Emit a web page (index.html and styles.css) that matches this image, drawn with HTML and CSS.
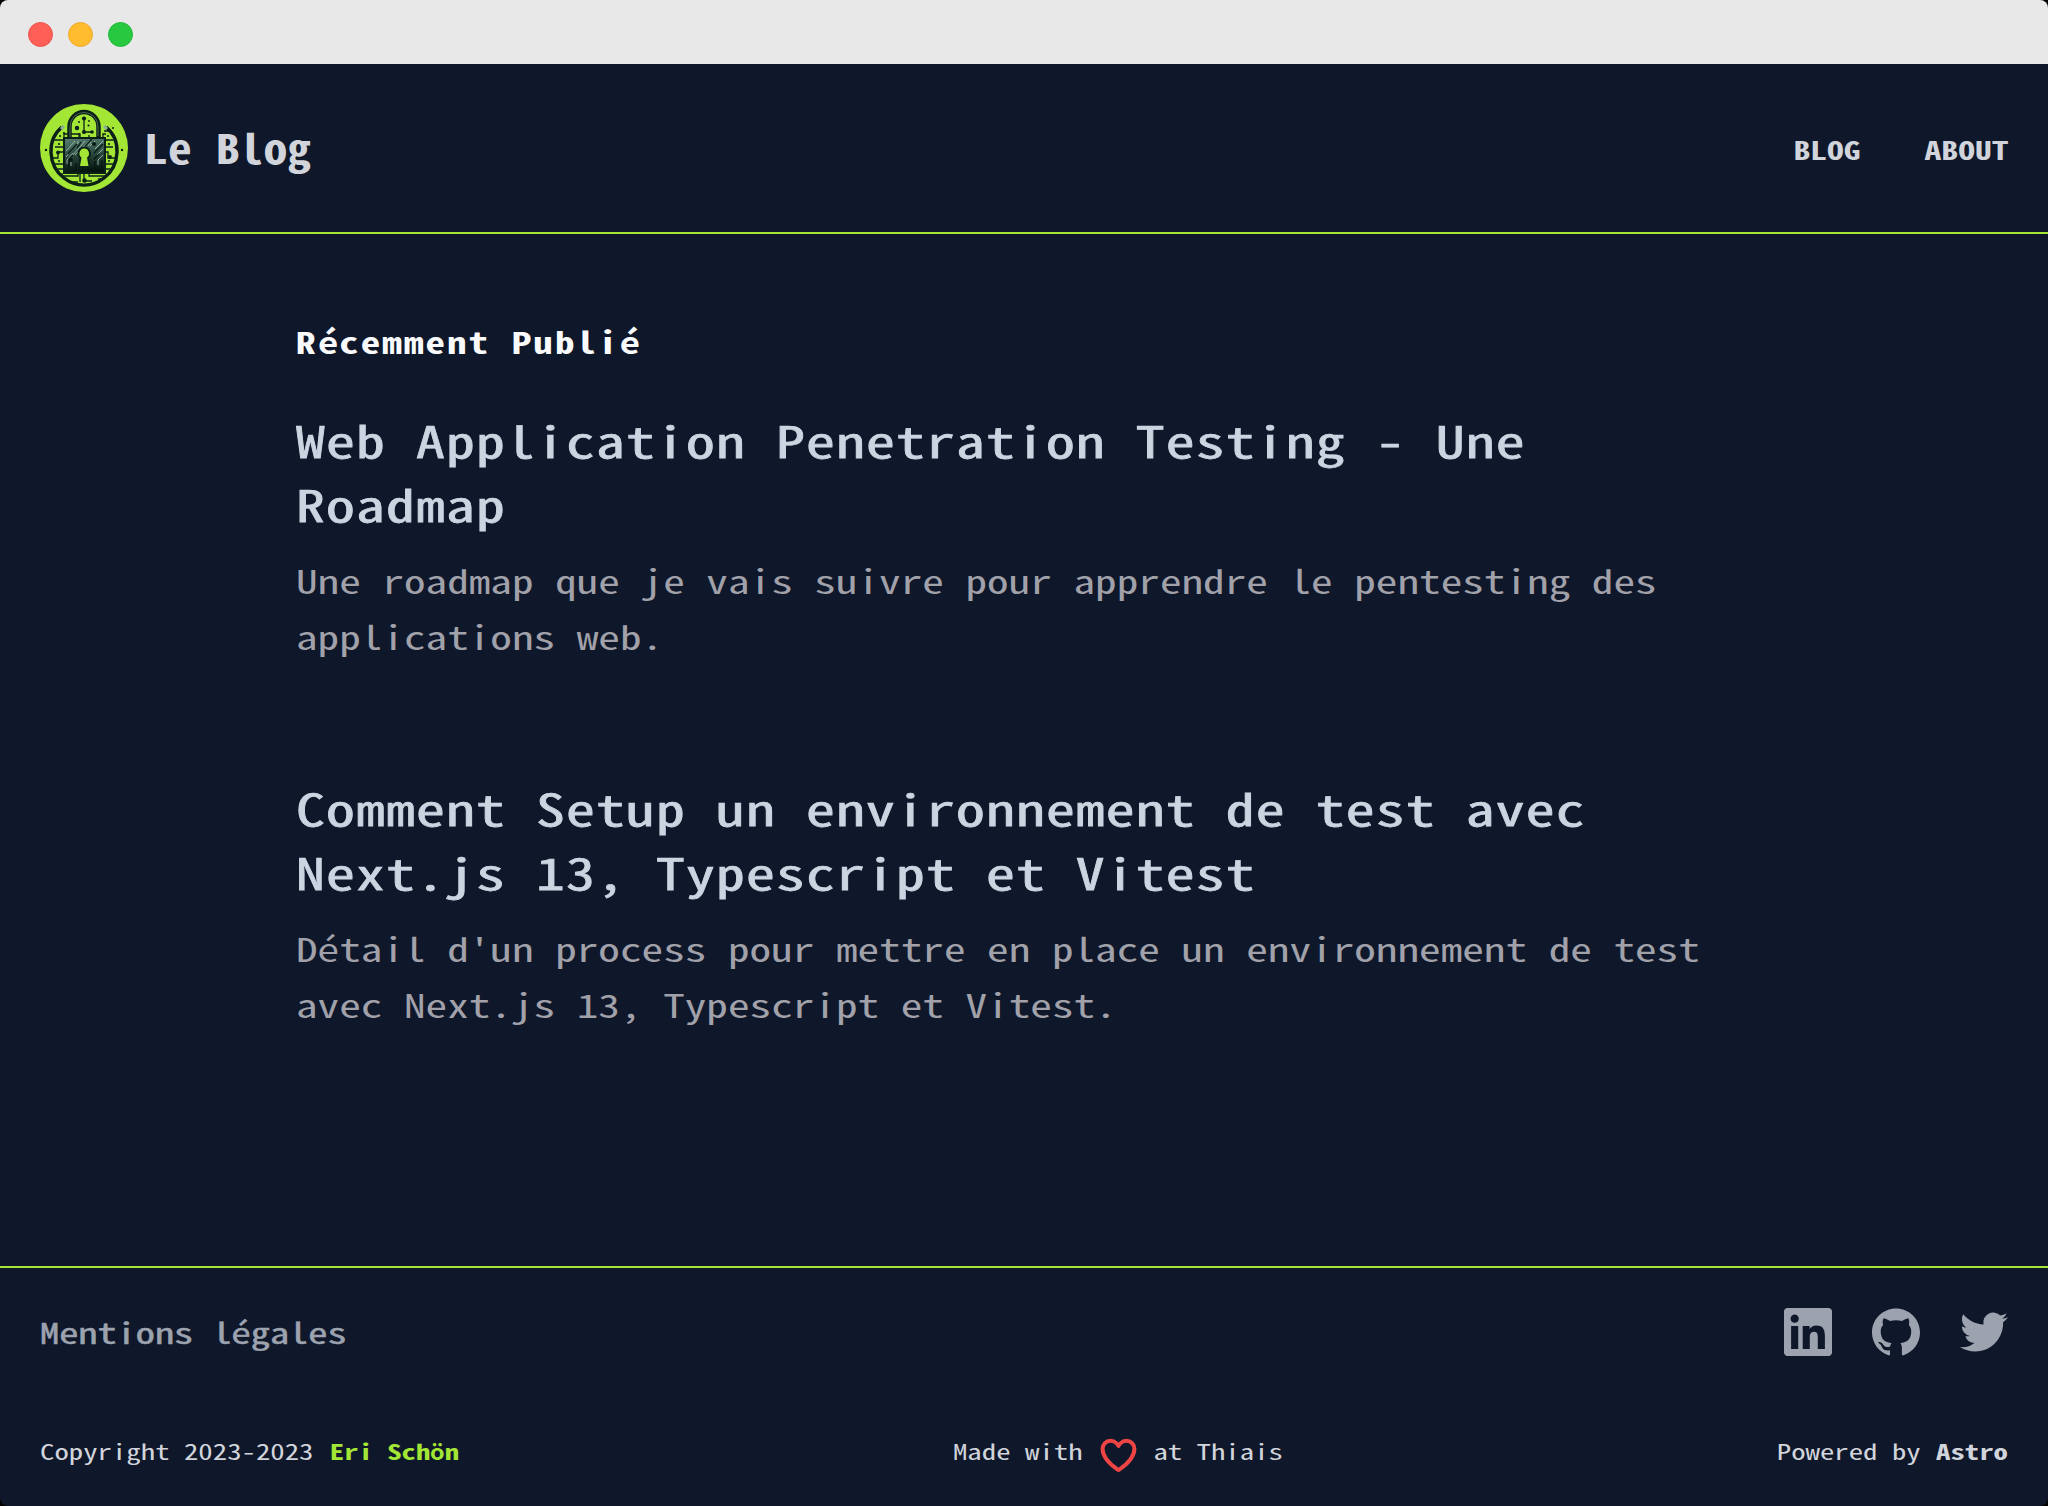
FILE: index.html
```html
<!DOCTYPE html>
<html lang="fr">
<head>
<meta charset="utf-8">
<title>Le Blog</title>
<link rel="stylesheet" href="styles.css">
</head>
<body>
<div class="window">
  <div class="titlebar"><span class="dot red"></span><span class="dot yellow"></span><span class="dot green"></span></div>
  <header class="header">
    <a class="brand">
      <svg class="logo" viewBox="0 0 88 88">
        <defs>
          <linearGradient id="body" x1="0" y1="0" x2="0.1" y2="1"><stop offset="0" stop-color="#587f70"/><stop offset=".5" stop-color="#2b4a40"/><stop offset="1" stop-color="#04130e"/></linearGradient>
          <linearGradient id="shine" x1="0" y1="0" x2="1" y2="0"><stop offset="0" stop-color="#8fb09f"/><stop offset=".5" stop-color="#9fbcae"/><stop offset="1" stop-color="#e6f3ec"/></linearGradient>
        </defs>
        <circle cx="44" cy="44" r="44" fill="#a3e635"/>
        <path d="M22 23C6 36 8 62 24 74c12 9.500 28 9.500 40 0C80 62 82 36 66 23" fill="none" stroke="#0b2018" stroke-width="3.400"/>
        <path d="M24 22l-3 3M64 22l3 3" stroke="#8fb09f" stroke-width="3"/>
        <g fill="none" stroke="#0b2018" stroke-width="1.300">
          <path d="M14 36h10M15 43h8M13 54h5v-6h5M14 60h9M18 65h6M24 34v-4h8M40 35v-5h-9M74 36H64M73 43h-8M75 54h-7v-6h-4M74 60h-9M70 65h-6M66 30h-3v5M64 27h6"/>
          <path d="M22 69v3h16v-3M40 69v9M44 69v8h8M49 69v3h17M30 78h8M58 75h6"/>
          <path d="M44 14v16M44 28h9M39 34v-5M49 34v-3"/>
        </g>
        <g fill="#0b2018">
          <circle cx="44" cy="14.500" r="2.100"/><circle cx="44" cy="28" r="2.100"/><circle cx="37" cy="24" r="2.200"/><circle cx="52" cy="28" r="1.800"/><circle cx="48.500" cy="21.500" r="1.100"/><circle cx="39" cy="18" r="1"/><circle cx="49" cy="17" r=".9"/><circle cx="44.500" cy="76.500" r="2.200"/>
          <circle cx="18" cy="48.500" r="1.900"/><circle cx="70" cy="53" r="1.900"/><circle cx="6" cy="46" r="1.200"/><circle cx="82" cy="46" r="1.200"/><circle cx="19" cy="40" r="1.100"/><circle cx="69" cy="40" r="1.100"/><circle cx="20" cy="32" r="1"/><circle cx="24" cy="29" r="1.100"/><circle cx="68" cy="32" r="1"/><circle cx="73" cy="24" r="1"/><circle cx="19" cy="57" r="1"/><circle cx="69" cy="57" r="1"/>
        </g>
        <path d="M29.500 35V22.500a14.500 14.500 0 0 1 29 0V35" fill="none" stroke="#0b2018" stroke-width="4.500"/>
        <path d="M30 34V22.500a14 14 0 0 1 28 0V32" fill="none" stroke="#48684f" stroke-width="1"/>
        <rect x="24" y="34" width="41" height="35" fill="url(#body)" stroke="#0b2018" stroke-width="2"/>
        <path d="M25 35.700h39" stroke="url(#shine)" stroke-width="1.500"/>
        <path d="M26 47l9-10M26 53l12-14v-2M31 53l10-11 4-5M35 51l14-14M50 42l5-5M55 45l8-8M57 51l6-6M27 60v-4l6-7M31 62v-5M58 61v-5l5-5M51 38l-3 4" fill="none" stroke="#a5c2b5" stroke-width="1" opacity=".85"/>
        <path d="M28 50l9-10M41 38l-4 6M45 42l7-7M54 49l9-9M54 55l5-5M29 65V55l4-4M36 66v-7M55 66v-9M62 64v-8" fill="none" stroke="#071810" stroke-width="1.200"/>
        <circle cx="31" cy="56" r="2" fill="#071810"/><circle cx="54" cy="40" r="2" fill="#071810"/>
        <path d="M44 44.500a5 5 0 0 1 3 9l1.500 8.500h-8.500L41.500 53.500a5 5 0 0 1 2.500-9z" fill="#a3e635" stroke="#0b2018" stroke-width="4" paint-order="stroke"/>
      </svg>
      <span class="brand-name">Le Blog</span>
    </a>
    <nav class="nav"><a>BLOG</a><a>ABOUT</a></nav>
  </header>
  <main class="main">
    <h1 class="section-title">R<span class="accent">é</span>cemment Publi<span class="accent">é</span></h1>
    <article class="post">
      <h2>Web Application Penetration Testing - Une Roadmap</h2>
      <p>Une roadmap que je vais suivre pour apprendre le pentesting des applications web.</p>
    </article>
    <article class="post">
      <h2>Comment Setup un environnement de test avec Next.js 13, Typescript et Vitest</h2>
      <p>D<span class="accent">é</span>tail d'un process pour mettre en place un environnement de test avec Next.js 13, Typescript et Vitest.</p>
    </article>
  </main>
  <footer class="footer">
    <div class="footer-top">
      <a class="legal">Mentions l<span class="accent">é</span>gales</a>
      <div class="social">
        <svg viewBox="0 0 24 24"><path d="M20.447 20.452h-3.554v-5.569c0-1.328-.027-3.037-1.852-3.037-1.853 0-2.136 1.445-2.136 2.939v5.667H9.351V9h3.414v1.561h.046c.477-.9 1.637-1.850 3.370-1.850 3.601 0 4.267 2.370 4.267 5.455v6.286zM5.337 7.433c-1.144 0-2.063-.926-2.063-2.065 0-1.138.92-2.063 2.063-2.063 1.140 0 2.064.925 2.064 2.063 0 1.139-.925 2.065-2.064 2.065zm1.782 13.019H3.555V9h3.564v11.452zM22.225 0H1.771C.792 0 0 .774 0 1.729v20.542C0 23.227.792 24 1.771 24h20.451C23.200 24 24 23.227 24 22.271V1.729C24 .774 23.200 0 22.222 0h.003z"/></svg>
        <svg viewBox="0 0 24 24"><path d="M12 .297c-6.630 0-12 5.373-12 12 0 5.303 3.438 9.800 8.205 11.385.6.113.82-.258.82-.577 0-.285-.01-1.040-.015-2.040-3.338.724-4.042-1.610-4.042-1.610C4.422 18.070 3.633 17.700 3.633 17.700c-1.087-.744.084-.729.084-.729 1.205.084 1.838 1.236 1.838 1.236 1.070 1.835 2.809 1.305 3.495.998.108-.776.417-1.305.76-1.605-2.665-.3-5.466-1.332-5.466-5.930 0-1.310.465-2.380 1.235-3.220-.135-.303-.54-1.523.105-3.176 0 0 1.005-.322 3.300 1.230.96-.267 1.980-.399 3-.405 1.020.006 2.040.138 3 .405 2.280-1.552 3.285-1.230 3.285-1.230.645 1.653.24 2.873.12 3.176.765.84 1.230 1.910 1.230 3.220 0 4.610-2.805 5.625-5.475 5.920.42.360.81 1.096.81 2.220 0 1.606-.015 2.896-.015 3.286 0 .315.210.69.825.57C20.565 22.092 24 17.592 24 12.297c0-6.627-5.373-12-12-12"/></svg>
        <svg viewBox="0 0 24 24"><path d="M23.953 4.570a10 10 0 01-2.825.775 4.958 4.958 0 002.163-2.723c-.951.555-2.005.959-3.127 1.184a4.920 4.920 0 00-8.384 4.482C7.690 8.095 4.067 6.130 1.640 3.162a4.822 4.822 0 00-.666 2.475c0 1.710.87 3.213 2.188 4.096a4.904 4.904 0 01-2.228-.616v.06a4.923 4.923 0 003.946 4.827 4.996 4.996 0 01-2.212.085 4.936 4.936 0 004.604 3.417 9.867 9.867 0 01-6.102 2.105c-.39 0-.779-.023-1.170-.067a13.995 13.995 0 007.557 2.209c9.053 0 13.998-7.496 13.998-13.985 0-.21 0-.42-.015-.63A9.935 9.935 0 0024 4.590z"/></svg>
      </div>
    </div>
    <div class="footer-bottom">
      <p>Copyright 2023-2023 <b class="author">Eri Sch<span class="accent umlaut">ö</span>n</b></p>
      <p class="made"><span>Made with</span><svg class="heart" viewBox="0 0 512 512" preserveAspectRatio="none"><path d="M352.920 80C288 80 256 144 256 144s-32-64-96.920-64c-52.760 0-94.540 44.140-95.080 96.810-1.100 109.330 86.730 187.080 183 252.420a16 16 0 0018 0c96.260-65.340 184.090-143.090 183-252.420-.54-52.670-42.320-96.810-95.080-96.810z"/></svg><span>at Thiais</span></p>
      <p>Powered by <b>Astro</b></p>
    </div>
  </footer>
</div>
</body>
</html>
```
FILE: styles.css
```css
:root { --wide: 1.34; }
* { box-sizing: border-box; margin: 0; padding: 0; }
body { background: #000; font-family: "Noto Sans Mono CJK JP", "Liberation Mono", monospace; }
.window { height: 1506px; display: flex; flex-direction: column; overflow: hidden; border-radius: 8px; background: #0f172a; color: #d1d5db; }
.titlebar { height: 64px; flex: none; display: flex; align-items: center; gap: 15px; padding: 4px 27.5px 0; background: #e8e8e8; }
.dot { width: 25px; height: 25px; border-radius: 50%; border: 1px solid; }
.red { background: #ff5f57; border-color: #ee5550; }
.yellow { background: #febc2e; border-color: #eeab30; }
.green { background: #28c840; border-color: #20ba3a; }
.header { height: 170px; flex: none; display: flex; align-items: center; justify-content: space-between; padding: 0 40px; border-bottom: 2px solid #a3e635; }
.brand { display: flex; align-items: center; gap: 16px; }
.logo { width: 88px; height: 88px; }
.brand-name { font-size: 41px; line-height: 56px; padding-bottom: 5px; font-weight: 700; transform: scaleX(1.165); transform-origin: left; }
.nav { display: flex; gap: calc(64px / var(--wide)); padding-top: 2px; margin-right: -.4px; font-size: 25.07px; line-height: 40px; font-weight: 700; transform: scaleX(var(--wide)); transform-origin: right; }
.main { flex: 1; padding: 79px 296px 0; }
.section-title { --track: 1.6px; font-size: 30px; line-height: 56px; letter-spacing: var(--track); font-weight: 700; color: #f9fafb; transform: scaleX(1.3); transform-origin: left; width: max-content; }
.post { width: calc(100% / var(--wide)); padding-top: 38px; height: 368px; transform: scaleX(var(--wide)); transform-origin: left; }
.post h2 { font-size: 42.98px; line-height: 64px; letter-spacing: .9px; font-weight: 400; -webkit-text-stroke: .75px #cbd5e1; color: #cbd5e1; }
.post p { margin-top: 17px; font-size: 32.24px; line-height: 56px; color: #a1a1aa; }
/* Accented letters are wider than the cell: narrow them to fit it. */
.accent { display: inline-block; width: calc(.5em + var(--track, 0px)); letter-spacing: 0; transform: scaleX(.89); transform-origin: left; }
.umlaut { transform: scaleX(.81); }
.footer { height: 240px; flex: none; border-top: 2px solid #a3e635; padding: 40px 40px 0; }
.footer-top { display: flex; justify-content: space-between; align-items: center; height: 48px; color: #9ca3af; }
.legal { font-size: 28.6px; line-height: 48px; -webkit-text-stroke: .5px #9ca3af; transform: scaleX(var(--wide)); transform-origin: left; }
.social { display: flex; gap: 40px; }
.social svg { width: 48px; height: 48px; fill: currentColor; }
.footer-bottom { width: calc(100% / var(--wide)); display: flex; justify-content: space-between; align-items: center; margin-top: 75px; height: 40px; font-size: 21.49px; line-height: 40px; transform: scaleX(var(--wide)); transform-origin: left; }
.footer-bottom b { margin-left: .7px; }
.footer-bottom .author { color: #a3e635; margin-left: 1.300px; }
.made { display: flex; align-items: center; gap: 10.600px; }
.heart { width: 31.700px; height: 42.500px; margin-top: 9px; fill: none; stroke: #ef4444; stroke-width: 48; stroke-linejoin: round; }
```
